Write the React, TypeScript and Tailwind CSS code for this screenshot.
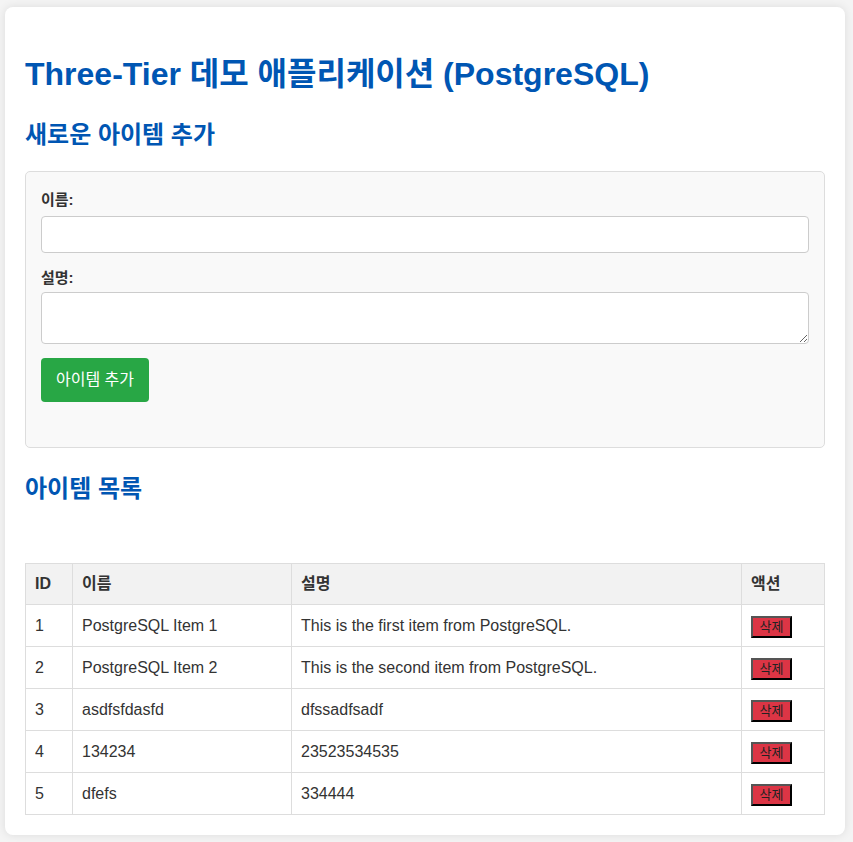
const items = [
  { id: 1, name: 'PostgreSQL Item 1', desc: 'This is the first item from PostgreSQL.' },
  { id: 2, name: 'PostgreSQL Item 2', desc: 'This is the second item from PostgreSQL.' },
  { id: 3, name: 'asdfsfdasfd', desc: 'dfssadfsadf' },
  { id: 4, name: '134234', desc: '23523534535' },
  { id: 5, name: 'dfefs', desc: '334444' },
];

export default function App() {
  return (
    <div
      className="min-h-[842px] bg-[#f4f4f4] pt-[7px] text-[#333]"
      style={{ fontFamily: '"Liberation Sans", "Noto Sans CJK KR", sans-serif' }}
    >
      <div className="ml-[5px] w-[840px] rounded-lg bg-white px-5 pt-[40px] pb-5 shadow-[0_0_10px_rgba(0,0,0,0.1)]">
        <h1 className="text-[32px] font-bold leading-[54px] text-[#0056b3]">
          Three-Tier 데모 애플리케이션 (PostgreSQL)
        </h1>
        <h2 className="mt-[19px] text-[24px] font-bold leading-[30px] text-[#0056b3]">새로운 아이템 추가</h2>

        <div className="mt-[21px] rounded-[5px] border border-[#ddd] bg-[#f9f9f9] px-[15px] pt-[18px] pb-[45px]">
          <label className="block text-[15px] font-bold leading-[20px]">이름:</label>
          <input className="mt-[6px] block h-[37px] w-full rounded-[4px] border border-[#ccc] bg-white" />
          <label className="mt-[15px] block text-[15px] font-bold leading-[20px]">설명:</label>
          <textarea className="mt-[4px] block h-[52px] w-full rounded-[4px] border border-[#ccc] bg-white" />
          <button className="mt-[14px] h-[44px] w-[108px] rounded-[4px] bg-[#28a745] text-[16px] text-white">
            아이템 추가
          </button>
        </div>

        <h2 className="mt-[26px] text-[24px] font-bold leading-[30px] text-[#0056b3]">아이템 목록</h2>

        <table className="mt-[59px] w-[800px] border-collapse text-[16px]">
          <thead>
            <tr className="h-[41px] bg-[#f2f2f2] text-left">
              <th className="w-[47px] border border-[#ddd] px-[9px] font-bold">ID</th>
              <th className="w-[219px] border border-[#ddd] px-[9px] font-bold">이름</th>
              <th className="w-[450px] border border-[#ddd] px-[9px] font-bold">설명</th>
              <th className="border border-[#ddd] px-[9px] font-bold">액션</th>
            </tr>
          </thead>
          <tbody>
            {items.map((it) => (
              <tr key={it.id} className="h-[42px]">
                <td className="border border-[#ddd] px-[9px]">{it.id}</td>
                <td className="border border-[#ddd] px-[9px]">{it.name}</td>
                <td className="border border-[#ddd] px-[9px]">{it.desc}</td>
                <td className="border border-[#ddd] px-[9px]">
                  <button className="h-[22px] w-[41px] border-2 border-t-[#555] border-l-[#555] border-r-black border-b-black bg-[#dc3545] text-[13px] leading-[16px] text-[#222]">
                    삭제
                  </button>
                </td>
              </tr>
            ))}
          </tbody>
        </table>
      </div>
    </div>
  );
}
